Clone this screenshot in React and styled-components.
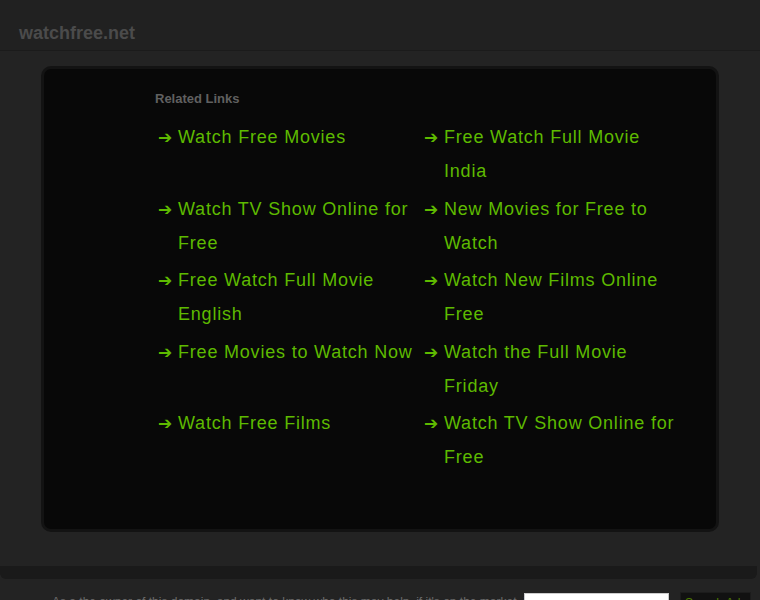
import React from "react";
import styled, { createGlobalStyle } from "styled-components";

const Global = createGlobalStyle`
  html, body { margin: 0; padding: 0; background: #222222; }
  body { font-family: "Liberation Sans", Arial, sans-serif; overflow: hidden; }
`;

const Page = styled.div`
  width: 760px;
  height: 600px;
  overflow: hidden;
  background: #232323;
`;

const Header = styled.header`
  height: 51px;
  background: #212121;
  border-bottom: 1px solid #1b1b1b;
  display: flex;
  align-items: center;
  padding: 16px 0 0 19px;
  box-sizing: border-box;
`;

const Logo = styled.div`
  font-size: 18px;
  font-weight: bold;
  color: #4b4b4b;
`;

const Main = styled.main`
  background: #232323;
  padding: 15px 0 34px 41px;
  border-bottom: 13px solid #1a1a1a;
  border-radius: 0 0 6px 6px;
  width: 757px;
  box-sizing: border-box;
`;

const Box = styled.section`
  width: 678px;
  height: 466px;
  box-sizing: border-box;
  border: 3px solid #131313;
  border-radius: 10px;
  background: #080808;
  padding: 22px 0 0 111px;
`;

const Title = styled.h2`
  margin: 0;
  font-size: 13px;
  line-height: 16px;
  font-weight: bold;
  color: #606060;
`;

const List = styled.ul`
  list-style: none;
  margin: 13px 0 0 3px;
  padding: 0;
  display: grid;
  grid-template-columns: 266px 266px;
  row-gap: 3.5px;
`;

const Item = styled.li`
  display: flex;
  font-size: 18px;
  line-height: 34px;
  letter-spacing: 0.8px;
  color: #5eba00;
`;

const Arrow = styled.span`
  width: 20px;
  flex: none;
  font-family: "DejaVu Sans", sans-serif;
  font-size: 17px;
  font-weight: bold;
  letter-spacing: 0;
`;

const Text = styled.a`
  color: inherit;
  text-decoration: none;
  max-width: 238px;
`;

const Footer = styled.footer`
  display: flex;
  align-items: flex-start;
  padding: 13px 0 0 52px;
  height: 40px;
  box-sizing: border-box;
`;

const FooterText = styled.p`
  margin: 3px 0 0;
  font-size: 12px;
  color: #6a6a6a;
  width: 472px;
  white-space: nowrap;
  overflow: hidden;
`;

const Input = styled.input`
  width: 145px;
  height: 20px;
  border: 1px solid #ccc;
  background: #fff;
  margin: 1px 0 0 0;
  padding: 0;
  box-sizing: border-box;
`;

const Button = styled.button`
  margin-left: 11px;
  background: #111;
  border: 1px solid #1c1c1c;
  color: #4d7a00;
  font-family: "Liberation Sans", Arial, sans-serif;
  font-size: 12px;
  padding: 2px 4px;
  height: 22px;
`;

const links = [
  "Watch Free Movies",
  "Free Watch Full Movie India",
  "Watch TV Show Online for Free",
  "New Movies for Free to Watch",
  "Free Watch Full Movie English",
  "Watch New Films Online Free",
  "Free Movies to Watch Now",
  "Watch the Full Movie Friday",
  "Watch Free Films",
  "Watch TV Show Online for Free",
];

export default function App() {
  return (
    <>
      <Global />
      <Page>
        <Header>
          <Logo>watchfree.net</Logo>
        </Header>
        <Main>
          <Box>
            <Title>Related Links</Title>
            <List>
              {links.map((l, i) => (
                <Item key={i}>
                  <Arrow>➔</Arrow>
                  <Text href="#">{l}</Text>
                </Item>
              ))}
            </List>
          </Box>
        </Main>
        <Footer>
          <FooterText>
            As a the owner of this domain, and want to know who this may help, if it's on the market, just ask
          </FooterText>
          <Input type="text" />
          <Button>Search Ads</Button>
        </Footer>
      </Page>
    </>
  );
}
